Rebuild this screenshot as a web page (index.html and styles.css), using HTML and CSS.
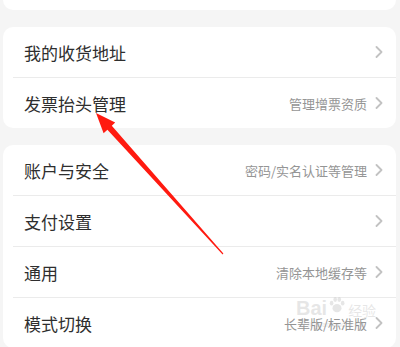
FILE: index.html
```html
<!DOCTYPE html>
<html lang="zh-CN">
<head>
<meta charset="utf-8">
<title>设置</title>
<link rel="stylesheet" href="styles.css">
</head>
<body>
<div class="page">
  <div class="card card-top"></div>

  <div class="card">
    <div class="row">
      <span class="label">我的收货地址</span>
      <span class="right"><svg class="chev" viewBox="0 0 8 12"><path d="M1.5 1 L6.5 6 L1.5 11"/></svg></span>
    </div>
    <div class="divider"></div>
    <div class="row">
      <span class="label">发票抬头管理</span>
      <span class="right"><span class="sub">管理增票资质</span><svg class="chev" viewBox="0 0 8 12"><path d="M1.5 1 L6.5 6 L1.5 11"/></svg></span>
    </div>
  </div>

  <div class="card">
    <div class="row">
      <span class="label">账户与安全</span>
      <span class="right"><span class="sub">密码/实名认证等管理</span><svg class="chev" viewBox="0 0 8 12"><path d="M1.5 1 L6.5 6 L1.5 11"/></svg></span>
    </div>
    <div class="divider"></div>
    <div class="row">
      <span class="label">支付设置</span>
      <span class="right"><svg class="chev" viewBox="0 0 8 12"><path d="M1.5 1 L6.5 6 L1.5 11"/></svg></span>
    </div>
    <div class="divider"></div>
    <div class="row">
      <span class="label">通用</span>
      <span class="right"><span class="sub">清除本地缓存等</span><svg class="chev" viewBox="0 0 8 12"><path d="M1.5 1 L6.5 6 L1.5 11"/></svg></span>
    </div>
    <div class="divider"></div>
    <div class="row">
      <span class="label">模式切换</span>
      <span class="right"><span class="sub">长辈版/标准版</span><svg class="chev" viewBox="0 0 8 12"><path d="M1.5 1 L6.5 6 L1.5 11"/></svg></span>
    </div>
  </div>

  <div class="watermark">
    <div class="wm-line">
      <span class="wm-bai">Bai</span>
      <svg class="wm-paw" viewBox="0 0 20 20">
        <ellipse cx="10" cy="13.5" rx="5" ry="4.5"/>
        <ellipse cx="4" cy="8" rx="2" ry="2.6"/>
        <ellipse cx="8" cy="4" rx="2" ry="2.6"/>
        <ellipse cx="12.5" cy="4" rx="2" ry="2.6"/>
        <ellipse cx="16.3" cy="8" rx="2" ry="2.6"/>
      </svg>
      <span class="wm-jy">经验</span>
    </div>
    <span class="wm-url">jingyan.baidu.com</span>
  </div>

  <svg class="arrow" viewBox="0 0 400 347" width="400" height="347">
    <polygon points="96,113 115.2,122.6 111.8,125.8 223.4,253.6 222.6,254.4 107.4,129.8 103.6,133.2"/>
  </svg>
</div>
</body>
</html>
```

FILE: styles.css
```css
html, body {
  margin: 0;
  padding: 0;
  background: #f5f5f5;
}

.page {
  position: relative;
  width: 400px;
  height: 347px;
  overflow: hidden;
  font-family: "Noto Sans CJK SC", "Noto Sans", sans-serif;
}

.card {
  background: #ffffff;
  margin: 0 4px 17px 3px;
  border-radius: 10px;
  overflow: hidden;
}

.card-top {
  height: 10px;
  border-radius: 0 0 10px 10px;
}

.row {
  height: 50px;
  display: flex;
  align-items: center;
  justify-content: space-between;
  padding: 0 13px 0 21px;
}

.label {
  font-size: 17px;
  color: #2e2e2e;
  line-height: 1;
}

.right {
  display: flex;
  align-items: center;
  gap: 8px;
}

.sub {
  font-size: 13px;
  color: #959595;
  line-height: 1;
}

.chev {
  width: 8px;
  height: 12px;
  fill: none;
  stroke: #c2c2c2;
  stroke-width: 1.8;
  stroke-linecap: round;
  stroke-linejoin: round;
}

.divider {
  height: 1px;
  background: #ebebeb;
  margin-left: 10px;
}

.watermark {
  position: absolute;
  left: 296px;
  top: 296px;
  display: flex;
  flex-direction: column;
  align-items: center;
  opacity: 0.18;
  color: #7a7a7a;
  font-family: "Liberation Sans", "Noto Sans CJK SC", sans-serif;
  pointer-events: none;
}

.wm-line {
  display: flex;
  align-items: flex-end;
}

.wm-bai {
  font-size: 20px;
  font-weight: bold;
  line-height: 1;
}

.wm-paw {
  width: 18px;
  height: 18px;
  fill: #7a7a7a;
  margin: 0 2px 4px 1px;
}

.wm-jy {
  font-size: 14px;
  line-height: 1;
}

.wm-url {
  font-size: 7px;
  line-height: 1;
  margin-top: 3px;
}

.arrow {
  position: absolute;
  left: 0;
  top: 0;
  pointer-events: none;
}

.arrow polygon {
  fill: #ff1a10;
}
```
